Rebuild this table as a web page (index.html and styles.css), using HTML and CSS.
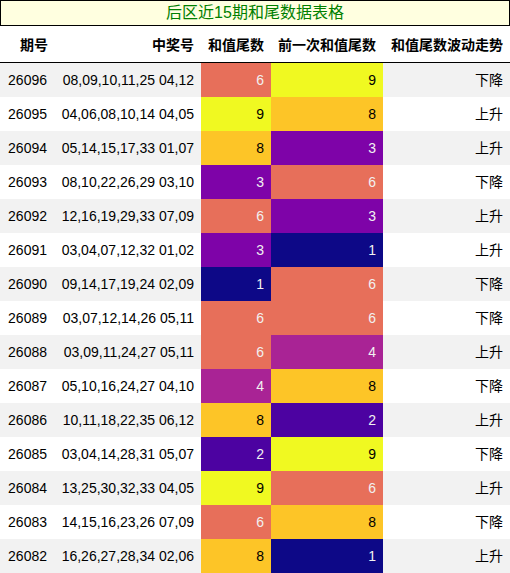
FILE: index.html
```html
<!DOCTYPE html>
<html lang="zh">

<head>
    <meta charset="UTF-8">
    <meta name="viewport" content="width=device-width, initial-scale=1.0">
    <title>后区近15期和尾数据表格</title>
    <link rel="stylesheet" href="styles.css">
</head>

<body>

    <table class="tail-table">
        <caption>后区近15期和尾数据表格</caption>
        <thead>
            <tr>
                <th class="col-issue">期号</th>
                <th class="col-nums">中奖号</th>
                <th class="col-tail">和值尾数</th>
                <th class="col-prev">前一次和值尾数</th>
                <th class="col-trend">和值尾数波动走势</th>
            </tr>
        </thead>
        <tbody>
            <tr><td>26096</td><td>08,09,10,11,25 04,12</td><td class="c6">6</td><td class="c9">9</td><td>下降</td></tr>
            <tr><td>26095</td><td>04,06,08,10,14 04,05</td><td class="c9">9</td><td class="c8">8</td><td>上升</td></tr>
            <tr><td>26094</td><td>05,14,15,17,33 01,07</td><td class="c8">8</td><td class="c3">3</td><td>上升</td></tr>
            <tr><td>26093</td><td>08,10,22,26,29 03,10</td><td class="c3">3</td><td class="c6">6</td><td>下降</td></tr>
            <tr><td>26092</td><td>12,16,19,29,33 07,09</td><td class="c6">6</td><td class="c3">3</td><td>上升</td></tr>
            <tr><td>26091</td><td>03,04,07,12,32 01,02</td><td class="c3">3</td><td class="c1">1</td><td>上升</td></tr>
            <tr><td>26090</td><td>09,14,17,19,24 02,09</td><td class="c1">1</td><td class="c6">6</td><td>下降</td></tr>
            <tr><td>26089</td><td>03,07,12,14,26 05,11</td><td class="c6">6</td><td class="c6">6</td><td>下降</td></tr>
            <tr><td>26088</td><td>03,09,11,24,27 05,11</td><td class="c6">6</td><td class="c4">4</td><td>上升</td></tr>
            <tr><td>26087</td><td>05,10,16,24,27 04,10</td><td class="c4">4</td><td class="c8">8</td><td>下降</td></tr>
            <tr><td>26086</td><td>10,11,18,22,35 06,12</td><td class="c8">8</td><td class="c2">2</td><td>上升</td></tr>
            <tr><td>26085</td><td>03,04,14,28,31 05,07</td><td class="c2">2</td><td class="c9">9</td><td>下降</td></tr>
            <tr><td>26084</td><td>13,25,30,32,33 04,05</td><td class="c9">9</td><td class="c6">6</td><td>上升</td></tr>
            <tr><td>26083</td><td>14,15,16,23,26 07,09</td><td class="c6">6</td><td class="c8">8</td><td>下降</td></tr>
            <tr><td>26082</td><td>16,26,27,28,34 02,06</td><td class="c8">8</td><td class="c1">1</td><td>上升</td></tr>
        </tbody>
    </table>

</body>

</html>
```

FILE: styles.css
```css
* {
    margin: 0;
    padding: 0;
    box-sizing: border-box;
}

body {
    font-family: "Liberation Sans", "Noto Sans CJK SC", sans-serif;
    font-size: 14px;
    color: #000;
    background: #fff;
}

.tail-table {
    width: 510px;
    border-collapse: collapse;
    table-layout: fixed;
}

.tail-table caption {
    background-color: #ffffe0;
    border: 1px solid #000;
    color: #008000;
    font-size: 16px;
    line-height: 24px;
    text-align: center;
}

.tail-table th,
.tail-table td {
    text-align: right;
    padding: 7px 7px 7px 0;
    height: 34px;
    line-height: 20px;
    white-space: nowrap;
}

.tail-table th {
    font-weight: bold;
    height: 36px;
    padding-top: 9px;
    padding-bottom: 6px;
    border-bottom: 1px solid #000;
}

.col-issue { width: 55px; padding-right: 8px; }
.col-nums { width: 146px; }
.col-tail { width: 70px; }
.col-prev { width: 112px; }
.col-trend { width: 127px; }

.tail-table tbody tr:nth-child(odd) {
    background-color: #f2f2f2;
}

.tail-table tbody td:first-child {
    padding-right: 8px;
}

/* plasma scale for tail values */
.c1 { background-color: #0d0887; color: #f1f1f1; }
.c2 { background-color: #4c02a1; color: #f1f1f1; }
.c3 { background-color: #7e03a8; color: #f1f1f1; }
.c4 { background-color: #a92395; color: #f1f1f1; }
.c6 { background-color: #e76f5a; color: #f1f1f1; }
.c8 { background-color: #fdc527; color: #000; }
.c9 { background-color: #f0f921; color: #000; }
```
